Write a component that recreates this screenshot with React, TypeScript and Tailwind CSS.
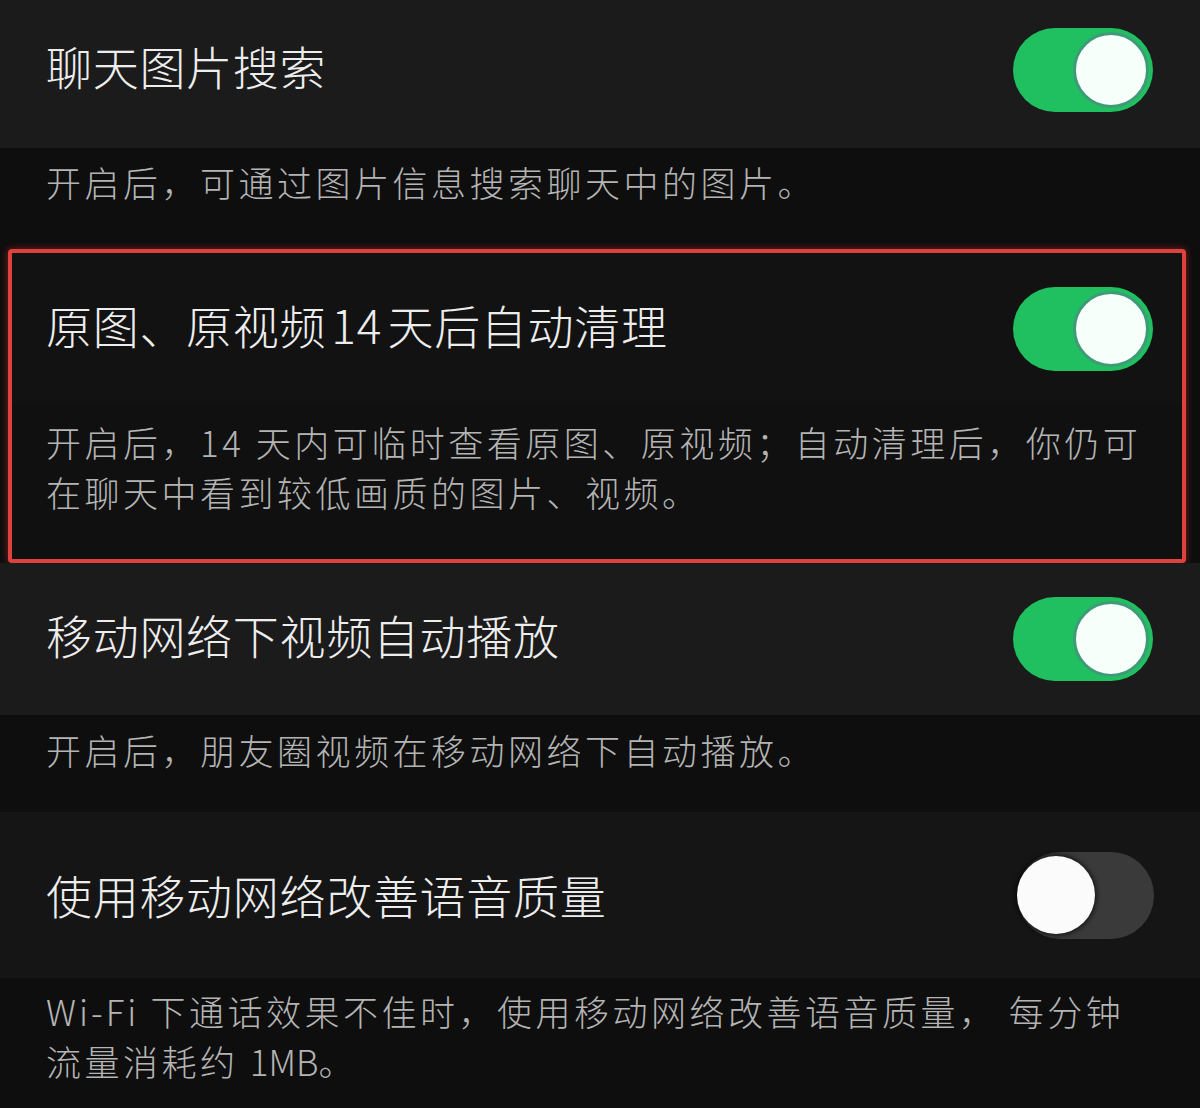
import React from "react";

const font = {
  fontFamily: '"Noto Sans CJK SC", "Noto Sans", sans-serif',
};

function Toggle({ on }: { on: boolean }) {
  if (on) {
    return (
      <div className="w-[140px] h-[84px] rounded-full bg-[#20c061] flex items-center justify-end pr-[4px] shrink-0">
        <div className="w-[76px] h-[76px] rounded-full bg-[#f6fffa] border-[3px] border-[#3f9a78]" />
      </div>
    );
  }
  return (
    <div className="w-[137px] h-[87px] rounded-full bg-[#3a3a3a] flex items-center justify-start shrink-0">
      <div className="w-[78px] h-[78px] rounded-full bg-[#fbfbfb] shadow-[0_0_4px_2px_rgba(0,0,0,0.55)]" />
    </div>
  );
}

function TitleRow({
  title,
  on,
  className,
  lifted = true,
}: {
  title: React.ReactNode;
  on: boolean;
  className: string;
  lifted?: boolean;
}) {
  return (
    <div className={`flex items-center justify-between ${className}`}>
      <div
        className={`text-[46px] leading-[56px] tracking-[0.7px] font-light text-[#ededed] whitespace-nowrap ${
          lifted ? "mb-[10px]" : "mb-[2px]"
        }`}
      >
        {title}
      </div>
      <Toggle on={on} />
    </div>
  );
}

function Desc({
  lines,
  className,
}: {
  lines: React.ReactNode[];
  className: string;
}) {
  return (
    <div
      className={`text-[35px] leading-[50px] tracking-[3.5px] font-light text-[#b4b4b4] ${className}`}
    >
      {lines.map((l, i) => (
        <div key={i} className="whitespace-pre">
          {l}
        </div>
      ))}
    </div>
  );
}

export default function App() {
  return (
    <div
      className="w-[1200px] h-[1108px] bg-[#0e0e0e] flex flex-col overflow-hidden"
      style={font}
    >
      <TitleRow
        title="聊天图片搜索"
        on
        className="h-[148px] bg-[#1b1b1b] pl-[46px] pr-[47px] pb-[8px]"
      />
      <Desc
        lines={["开启后，可通过图片信息搜索聊天中的图片。"]}
        className="h-[101px] bg-[#0e0e0e] pl-[46px] pt-[9px]"
      />

      <div className="ml-[8px] w-[1178px] h-[314px] border-[4px] border-[#dd423e] rounded-[4px] shadow-[0_0_7px_rgba(210,40,40,0.6)] bg-[#121212] flex flex-col">
        <TitleRow
          title={
            <>
              原图、原视频<span className="mx-[5px] tracking-[1px]">14</span>天后自动清理
            </>
          }
          on
          className="h-[152px] pl-[34px] pr-[29px]"
        />
        <Desc
          lines={[
            "开启后，14 天内可临时查看原图、原视频；自动清理后，你仍可",
            "在聊天中看到较低画质的图片、视频。",
          ]}
          className="flex-1 bg-[#101010] pl-[34px] pt-[12px]"
        />
      </div>

      <TitleRow
        title="移动网络下视频自动播放"
        on
        className="h-[152px] bg-[#1b1b1b] pl-[46px] pr-[47px]"
      />
      <Desc
        lines={["开启后，朋友圈视频在移动网络下自动播放。"]}
        className="h-[97px] bg-[#0e0e0e] pl-[46px] pt-[10px]"
      />

      <TitleRow
        title="使用移动网络改善语音质量"
        on={false}
        lifted={false}
        className="h-[166px] bg-[#151515] pl-[46px] pr-[46px]"
      />
      <Desc
        lines={[
          <>
            <span className="tracking-[3px]">Wi-Fi</span> 下通话效果不佳时，使用移动网络改善语音质量， 每分钟
          </>,
          <>
            流量消耗约 <span className="tracking-[0px]">1MB</span>。
          </>,
        ]}
        className="flex-1 bg-[#0e0e0e] pl-[46px] pt-[8px]"
      />
    </div>
  );
}
